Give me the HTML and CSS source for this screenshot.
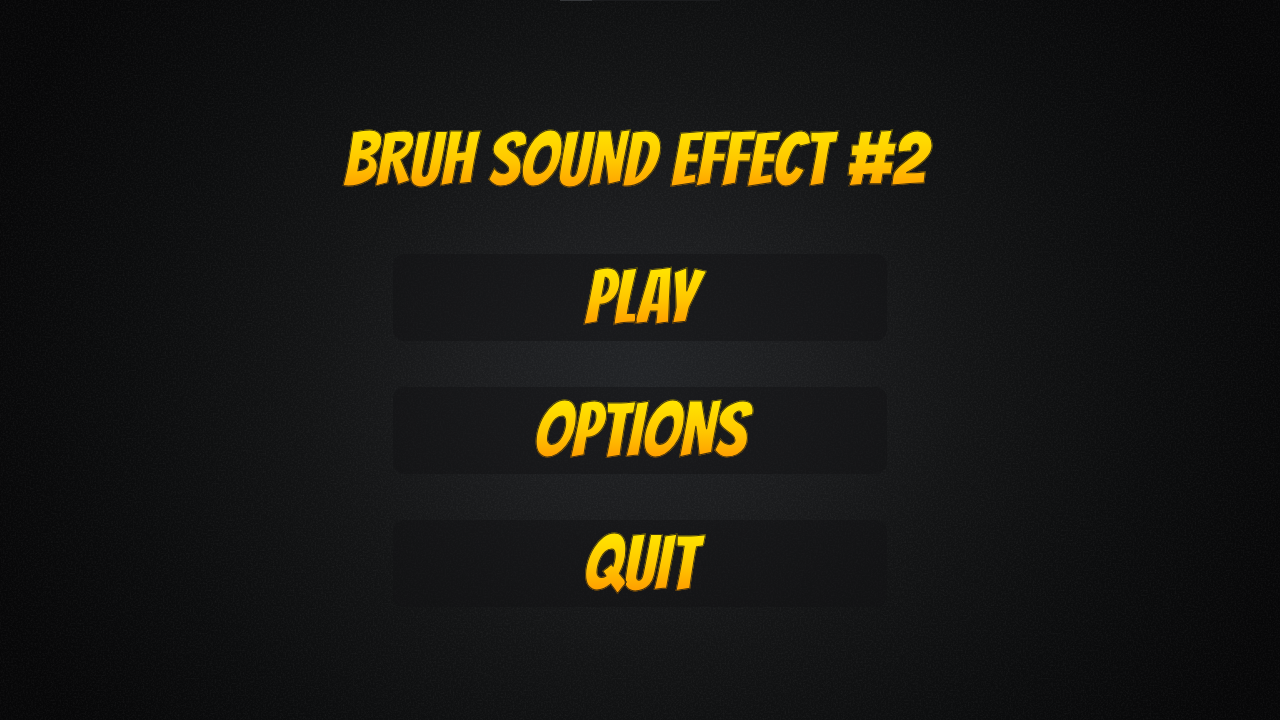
FILE: index.html
```html
<!DOCTYPE html>
<html lang="en">
<head>
<meta charset="utf-8">
<meta name="viewport" content="width=device-width, initial-scale=1">
<title>Bruh Sound Effect #2</title>
<link rel="stylesheet" href="styles.css">
</head>
<body>
<svg class="grain" aria-hidden="true">
  <filter id="noise">
    <feTurbulence type="fractalNoise" baseFrequency="0.6" numOctaves="2" seed="4"/>
    <feColorMatrix type="matrix" values="0 0 0 0 1  0 0 0 0 1  0 0 0 0 1  1.6 0 0 0 -0.65"/>
  </filter>
  <rect width="100%" height="100%" filter="url(#noise)"/>
</svg>
<div class="edge" aria-hidden="true"></div>
<main class="screen">
  <h1 class="title"><span class="lettering">BRUH SOUND EFFECT #2</span></h1>
  <nav class="menu" aria-label="Main menu">
    <button class="menu-button" type="button"><span class="lettering">PLAY</span></button>
    <button class="menu-button" type="button"><span class="lettering">OPTIONS</span></button>
    <button class="menu-button" type="button"><span class="lettering">QUIT</span></button>
  </nav>
</main>
</body>
</html>
```
FILE: styles.css
```css
* {
  box-sizing: border-box;
}

body {
  margin: 0;
  min-height: 100vh;
  position: relative;
  background:
    radial-gradient(ellipse 54% 84% at 50% 52%, #222427 0%, #1c1d1f 24%, #131415 48%, #0c0d0e 74%, #070708 100%);
  font-family: Bangers, "Roboto Condensed", "Liberation Sans", sans-serif;
}

/* Fine grain over the backdrop */
.grain {
  position: absolute;
  inset: 0;
  width: 100%;
  height: 100%;
  opacity: 0.06;
  pointer-events: none;
}

/* Hairline of light on the top edge */
.edge {
  position: absolute;
  top: 0;
  left: 50%;
  width: 160px;
  height: 1px;
  margin-left: -80px;
  background: linear-gradient(90deg, #35373a 20%, #1b1c1e 20%);
}

.screen {
  position: relative;
  min-height: 100vh;
  padding: 112px 24px;
  display: flex;
  flex-direction: column;
  align-items: center;
  gap: 46px;
}

.title {
  margin: 0;
  padding-right: 10px;
  font-size: 75px;
  font-weight: 400;
  line-height: 96px;
  text-align: center;
}

.lettering {
  display: inline-block;
  padding: 0 16px;
  color: transparent;
  background: linear-gradient(180deg, #ffe200 20%, #ffc600 52%, #ffa000 80%);
  -webkit-background-clip: text;
  background-clip: text;
  -webkit-text-stroke: 1px rgba(20, 19, 19, 0.8);
}

.menu {
  width: 100%;
  max-width: 494px;
  display: flex;
  flex-direction: column;
  gap: 46px;
}

.menu-button {
  width: 100%;
  min-height: 87px;
  padding: 0;
  border: 0;
  border-radius: 12px;
  background: rgba(17, 18, 19, 0.5);
  font-family: inherit;
  font-size: 76px;
  line-height: 87px;
  cursor: pointer;
}
```
